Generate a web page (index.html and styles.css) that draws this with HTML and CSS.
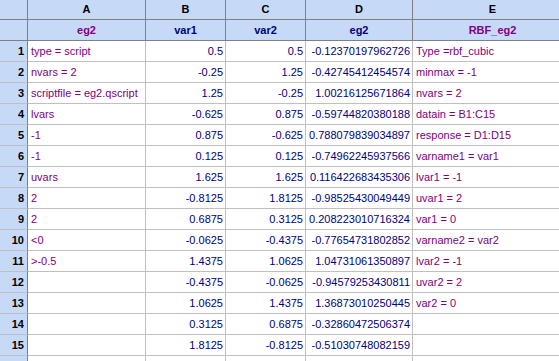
FILE: index.html
```html
<!DOCTYPE html>
<html lang="en">
<head>
  <meta charset="UTF-8">
  <title>eg2</title>
  <link rel="stylesheet" href="styles.css">
</head>
<body>
  <table class="sheet">
    <colgroup>
      <col class="c-row">
      <col class="c-a">
      <col class="c-b">
      <col class="c-c">
      <col class="c-d">
      <col class="c-e">
    </colgroup>
    <thead>
      <tr class="letters">
        <th class="corner"></th>
        <th>A</th>
        <th>B</th>
        <th>C</th>
        <th>D</th>
        <th>E</th>
      </tr>
      <tr class="names">
        <th class="corner"></th>
        <th class="str">eg2</th>
        <th class="num">var1</th>
        <th class="num">var2</th>
        <th class="num">eg2</th>
        <th class="str">RBF_eg2</th>
      </tr>
    </thead>
    <tbody>
      <tr><th>1</th><td class="str">type = script</td><td class="num">0.5</td><td class="num">0.5</td><td class="num">-0.12370197962726</td><td class="str">Type =rbf_cubic</td></tr>
      <tr><th>2</th><td class="str">nvars = 2</td><td class="num">-0.25</td><td class="num">1.25</td><td class="num">-0.42745412454574</td><td class="str">minmax = -1</td></tr>
      <tr><th>3</th><td class="str">scriptfile = eg2.qscript</td><td class="num">1.25</td><td class="num">-0.25</td><td class="num">1.00216125671864</td><td class="str">nvars = 2</td></tr>
      <tr><th>4</th><td class="str">lvars</td><td class="num">-0.625</td><td class="num">0.875</td><td class="num">-0.59744820380188</td><td class="str">datain = B1:C15</td></tr>
      <tr><th>5</th><td class="str">-1</td><td class="num">0.875</td><td class="num">-0.625</td><td class="num">0.788079839034897</td><td class="str">response = D1:D15</td></tr>
      <tr><th>6</th><td class="str">-1</td><td class="num">0.125</td><td class="num">0.125</td><td class="num">-0.74962245937566</td><td class="str">varname1 = var1</td></tr>
      <tr><th>7</th><td class="str">uvars</td><td class="num">1.625</td><td class="num">1.625</td><td class="num">0.116422683435306</td><td class="str">lvar1 = -1</td></tr>
      <tr><th>8</th><td class="str">2</td><td class="num">-0.8125</td><td class="num">1.8125</td><td class="num">-0.98525430049449</td><td class="str">uvar1 = 2</td></tr>
      <tr><th>9</th><td class="str">2</td><td class="num">0.6875</td><td class="num">0.3125</td><td class="num">0.208223010716324</td><td class="str">var1 = 0</td></tr>
      <tr><th>10</th><td class="str">&lt;0</td><td class="num">-0.0625</td><td class="num">-0.4375</td><td class="num">-0.77654731802852</td><td class="str">varname2 = var2</td></tr>
      <tr><th>11</th><td class="str">&gt;-0.5</td><td class="num">1.4375</td><td class="num">1.0625</td><td class="num">1.04731061350897</td><td class="str">lvar2 = -1</td></tr>
      <tr><th>12</th><td class="str"></td><td class="num">-0.4375</td><td class="num">-0.0625</td><td class="num">-0.94579253430811</td><td class="str">uvar2 = 2</td></tr>
      <tr><th>13</th><td class="str"></td><td class="num">1.0625</td><td class="num">1.4375</td><td class="num">1.36873010250445</td><td class="str">var2 = 0</td></tr>
      <tr><th>14</th><td class="str"></td><td class="num">0.3125</td><td class="num">0.6875</td><td class="num">-0.32860472506374</td><td class="str"></td></tr>
      <tr><th>15</th><td class="str"></td><td class="num">1.8125</td><td class="num">-0.8125</td><td class="num">-0.51030748082159</td><td class="str"></td></tr>
      <tr><th></th><td class="str"></td><td class="num"></td><td class="num"></td><td class="num"></td><td class="str"></td></tr>
    </tbody>
  </table>
</body>
</html>
```

FILE: styles.css
```css
* { margin: 0; padding: 0; box-sizing: border-box; }
html, body { overflow: hidden; }
body {
  background-color: #ffffff;
  font-family: 'Liberation Sans', Arial, sans-serif;
  font-size: 11px;
  color: #000;
}
.sheet {
  table-layout: fixed;
  border-collapse: separate;
  border-spacing: 0;
  width: 573px;
}
.c-row { width: 28px; }
.c-a { width: 118px; }
.c-b { width: 80px; }
.c-c { width: 80px; }
.c-d { width: 107px; }
.c-e { width: 160px; }

.sheet th,
.sheet td {
  height: 21px;
  border-right: 1px solid #c0c0c0;
  border-bottom: 1px solid #c0c0c0;
  white-space: nowrap;
  overflow: hidden;
  line-height: 20px;
  vertical-align: middle;
}
.sheet td { padding: 0 3px; }
.sheet td.num { text-align: right; color: #000080; padding-right: 2px; }
.sheet td.str { text-align: left; color: #800080; }

/* column headers */
.sheet thead th {
  background-color: #c6daf8;
  border-right-color: #808080;
  border-bottom-color: #808080;
  text-align: center;
  font-weight: bold;
}
.sheet .letters th { height: 20px; line-height: 19px; color: #000; }
.sheet .names th.num { color: #000080; }
.sheet .names th.str { color: #800080; }

/* row headers */
.sheet tbody th {
  background-color: #c6daf8;
  border-right-color: #808080;
  text-align: right;
  padding-right: 3px;
  font-weight: bold;
  color: #000;
}
```
